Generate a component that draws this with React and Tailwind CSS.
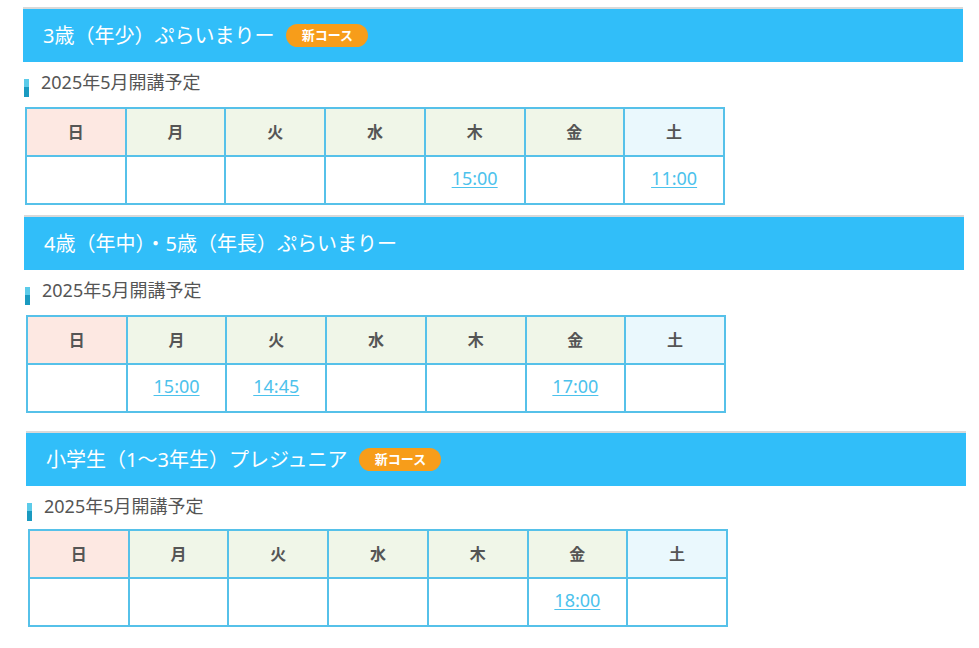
const sections = [
  {
    title: "3歳（年少）ぷらいまりー",
    isNew: true,
    wrap: "ml-[23px] pt-[7px]",
    gap: "mt-[10px]",
    times: { 木: "15:00", 土: "11:00" },
  },
  {
    title: "4歳（年中）・5歳（年長）ぷらいまりー",
    isNew: false,
    wrap: "ml-[24px] mt-[10px]",
    gap: "mt-[10px]",
    times: { 月: "15:00", 火: "14:45", 金: "17:00" },
  },
  {
    title: "小学生（1～3年生）プレジュニア",
    isNew: true,
    wrap: "ml-[26px] mt-[18px]",
    gap: "mt-[8px]",
    times: { 金: "18:00" },
  },
];

const days = ["日", "月", "火", "水", "木", "金", "土"];

function headBg(d) {
  if (d === "日") return "bg-[#fde8e2]";
  if (d === "土") return "bg-[#eaf8fd]";
  return "bg-[#f0f6e8]";
}

function Section({ title, isNew, wrap, gap, times }) {
  return (
    <div className={wrap}>
      <div className="w-[940px] h-[55px] border-t-2 border-[#d9d9d9] bg-[#31bef9] flex items-center pl-[20px] gap-[12px]">
        <h2 className="text-[20px] text-white leading-none">{title}</h2>
        {isNew && (
          <span className="h-[23px] w-[82px] rounded-full bg-[#f79d1a] text-white text-[13px] font-bold flex items-center justify-center">
            新コース
          </span>
        )}
      </div>
      <div className="flex items-start h-[35px] pt-[8px] ml-[1px]">
        <div className="mt-[9px] w-[5px] h-[18px] flex flex-col">
          <div className="h-[8px] bg-[#5ccbe9]"></div>
          <div className="flex-1 bg-[#1a9ac0]"></div>
        </div>
        <p className="ml-[12px] text-[18px] leading-[24px] text-[#555]">2025年5月開講予定</p>
      </div>
      <table className={`ml-[2px] w-[700px] table-fixed border-collapse ${gap}`}>
        <thead>
          <tr>
            {days.map((d) => (
              <th
                key={d}
                className={`h-[48px] border-2 border-[#56c1e9] text-[16px] font-bold text-[#555] ${headBg(d)}`}
              >
                {d}
              </th>
            ))}
          </tr>
        </thead>
        <tbody>
          <tr>
            {days.map((d) => (
              <td key={d} className="h-[48px] pb-[3px] border-2 border-[#56c1e9] text-center">
                {times[d] && (
                  <a href="#" className="text-[18px] text-[#4cc2ec] underline underline-offset-2">
                    {times[d]}
                  </a>
                )}
              </td>
            ))}
          </tr>
        </tbody>
      </table>
    </div>
  );
}

export default function App() {
  return (
    <div
      className="min-h-screen bg-white pb-6"
      style={{ fontFamily: '"Noto Sans", "Noto Sans CJK JP", sans-serif' }}
    >
      {sections.map((s) => (
        <Section key={s.title} {...s} />
      ))}
    </div>
  );
}
